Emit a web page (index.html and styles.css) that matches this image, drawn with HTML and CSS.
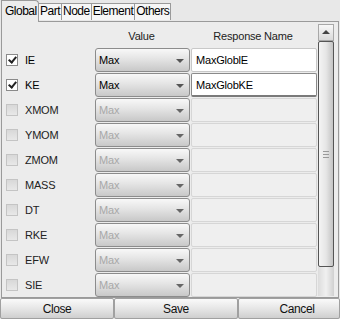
FILE: index.html
```
<!DOCTYPE html>
<html lang="en">
<head>
  <meta charset="UTF-8" />
  <title>Response Settings</title>
  <link rel="stylesheet" href="styles.css">
</head>
<body>
  <div class="window">
    <div class="tabs">
      <div class="tab active">Global</div>
      <div class="tab">Part</div>
      <div class="tab">Node</div>
      <div class="tab">Element</div>
      <div class="tab">Others</div>
    </div>

    <div class="panel">
      <div class="table">
        <div class="head">
          <span class="h-value">Value</span>
          <span class="h-name">Response Name</span>
        </div>

        <div class="row">
          <span class="check on"></span><span class="label">IE</span>
          <div class="combo">Max<i class="arrow"></i></div>
          <div class="field">MaxGloblE</div>
        </div>
        <div class="row">
          <span class="check on"></span><span class="label">KE</span>
          <div class="combo">Max<i class="arrow"></i></div>
          <div class="field focus">MaxGlobKE</div>
        </div>
        <div class="row off">
          <span class="check"></span><span class="label">XMOM</span>
          <div class="combo">Max<i class="arrow"></i></div>
          <div class="field"></div>
        </div>
        <div class="row off">
          <span class="check"></span><span class="label">YMOM</span>
          <div class="combo">Max<i class="arrow"></i></div>
          <div class="field"></div>
        </div>
        <div class="row off">
          <span class="check"></span><span class="label">ZMOM</span>
          <div class="combo">Max<i class="arrow"></i></div>
          <div class="field"></div>
        </div>
        <div class="row off">
          <span class="check"></span><span class="label">MASS</span>
          <div class="combo">Max<i class="arrow"></i></div>
          <div class="field"></div>
        </div>
        <div class="row off">
          <span class="check"></span><span class="label">DT</span>
          <div class="combo">Max<i class="arrow"></i></div>
          <div class="field"></div>
        </div>
        <div class="row off">
          <span class="check"></span><span class="label">RKE</span>
          <div class="combo">Max<i class="arrow"></i></div>
          <div class="field"></div>
        </div>
        <div class="row off">
          <span class="check"></span><span class="label">EFW</span>
          <div class="combo">Max<i class="arrow"></i></div>
          <div class="field"></div>
        </div>
        <div class="row off">
          <span class="check"></span><span class="label">SIE</span>
          <div class="combo">Max<i class="arrow"></i></div>
          <div class="field"></div>
        </div>
      </div>

      <div class="scrollbar">
        <div class="sb-up"><i></i></div>
        <div class="sb-thumb"><span class="grip"></span></div>
        <div class="sb-track"></div>
      </div>
    </div>

    <div class="buttons">
      <button class="btn close">Close</button>
      <button class="btn save">Save</button>
      <button class="btn cancel">Cancel</button>
    </div>
  </div>
</body>
</html>
```

FILE: styles.css
```
* {
  box-sizing: border-box;
  margin: 0;
  padding: 0;
}
body {
  background: #e8e8e8;
  font-family: 'Liberation Sans', Arial, sans-serif;
  font-size: 11px;
  letter-spacing: -0.2px;
  color: #000;
}
.window {
  width: 340px;
  height: 319px;
  display: flex;
  flex-direction: column;
  background: #e8e8e8;
}

/* tabs */
.tabs {
  display: flex;
  align-items: flex-end;
  height: 22px;
  padding-left: 1px;
}
.tab {
  height: 17px;
  padding: 0 1px;
  line-height: 15px;
  font-size: 12px;
  letter-spacing: -0.5px;
  background: #f6f6f6;
  border: 1px solid #9a9a9a;
  border-bottom: none;
  border-left: none;
  margin-bottom: 1px;
}
.tab.active {
  height: 22px;
  width: 38px;
  padding: 3px 0 0 3px;
  background: #ececec;
  border-left: 1px solid #9a9a9a;
  border-radius: 0 4px 0 0;
  margin-bottom: -1px;
  position: relative;
  z-index: 1;
}

/* panel */
.panel {
  height: 277px;
  display: flex;
  background: #ececec;
  border: 1px solid #9a9a9a;
  margin-left: 1px;
  margin-right: 1px;
}
.table {
  width: 316px;
}
.head {
  display: flex;
  height: 26px;
  padding-top: 8px;
  color: #222;
}
.h-value {
  margin-left: 92px;
  width: 95px;
  text-align: center;
}
.h-name {
  margin-left: 1px;
  width: 126px;
  text-align: center;
}
.row {
  display: flex;
  align-items: center;
  height: 25px;
  padding-bottom: 1px;
}
.check {
  width: 12px;
  height: 12px;
  margin-left: 4px;
  border: 1px solid #8a8a8a;
  background: #fff;
  position: relative;
}
.check.on::after {
  content: "";
  position: absolute;
  left: 3px;
  top: 0px;
  width: 3px;
  height: 6px;
  border: solid #222;
  border-width: 0 2px 2px 0;
  transform: rotate(40deg);
}
.row.off .check {
  border-color: #c4c4c4;
  background: linear-gradient(#d8d8d8, #e8e8e8);
}
.label {
  width: 70px;
  margin-left: 7px;
}
.combo {
  width: 95px;
  height: 24px;
  border: 1px solid #8c8c8c;
  border-radius: 3px;
  background: linear-gradient(#f8f8f8, #e4e4e4 45%, #c8c8c8);
  padding: 5px 0 0 3px;
  position: relative;
}
.arrow {
  position: absolute;
  right: 5px;
  top: 10px;
  border-left: 4px solid transparent;
  border-right: 4px solid transparent;
  border-top: 4px solid #555;
}
.field {
  width: 126px;
  height: 24px;
  margin-left: 1px;
  background: #fff;
  border: 1px solid #c8c8c8;
  border-radius: 2px;
  padding: 5px 0 0 4px;
}
.field.focus {
  border: 1px solid #8a8a8a;
  border-bottom: 2px solid #7a7a7a;
}
.row.off .label {
  color: #222;
}
.row.off .combo {
  color: #a8a8a8;
}
.row.off .arrow {
  border-top-color: #666;
}
.row.off .field {
  background: #efefef;
  border-color: #d6d6d6;
}

/* scrollbar */
.scrollbar {
  width: 16px;
  margin: 2px 0 1px 0;
  display: flex;
  flex-direction: column;
  background: linear-gradient(90deg, #dcdcdc, #f0f0f0 50%, #d0d0d0);
}
.sb-up {
  height: 17px;
  border: 1px solid #a8a8a8;
  background: linear-gradient(#f8f8f8, #dadada);
  position: relative;
}
.sb-up i {
  position: absolute;
  left: 3px;
  top: 5px;
  border-left: 4px solid transparent;
  border-right: 4px solid transparent;
  border-bottom: 4px solid #444;
}
.sb-thumb {
  height: 226px;
  border: 1px solid #555;
  border-radius: 2px;
  background: linear-gradient(90deg, #f4f4f4, #e6e6e6 50%, #c4c4c4);
  display: flex;
  align-items: center;
  justify-content: center;
}
.grip {
  width: 6px;
  height: 7px;
  border-top: 1px solid #999;
  border-bottom: 1px solid #999;
  background: linear-gradient(transparent 2px, #999 2px, #999 3px, transparent 3px);
}
.sb-track {
  flex: 1;
}

/* buttons */
.buttons {
  display: flex;
  height: 21px;
}
.btn {
  font-family: 'Liberation Sans', Arial, sans-serif;
  font-size: 12px;
  letter-spacing: -0.4px;
  color: #111;
  height: 21px;
  border: 1px solid #a0a0a0;
  border-radius: 2px;
  background: linear-gradient(#fafafa, #e6e6e6 50%, #cfcfcf);
}
.close {
  width: 114px;
}
.save {
  width: 124px;
}
.cancel {
  width: 102px;
  padding-left: 16px;
}
```
